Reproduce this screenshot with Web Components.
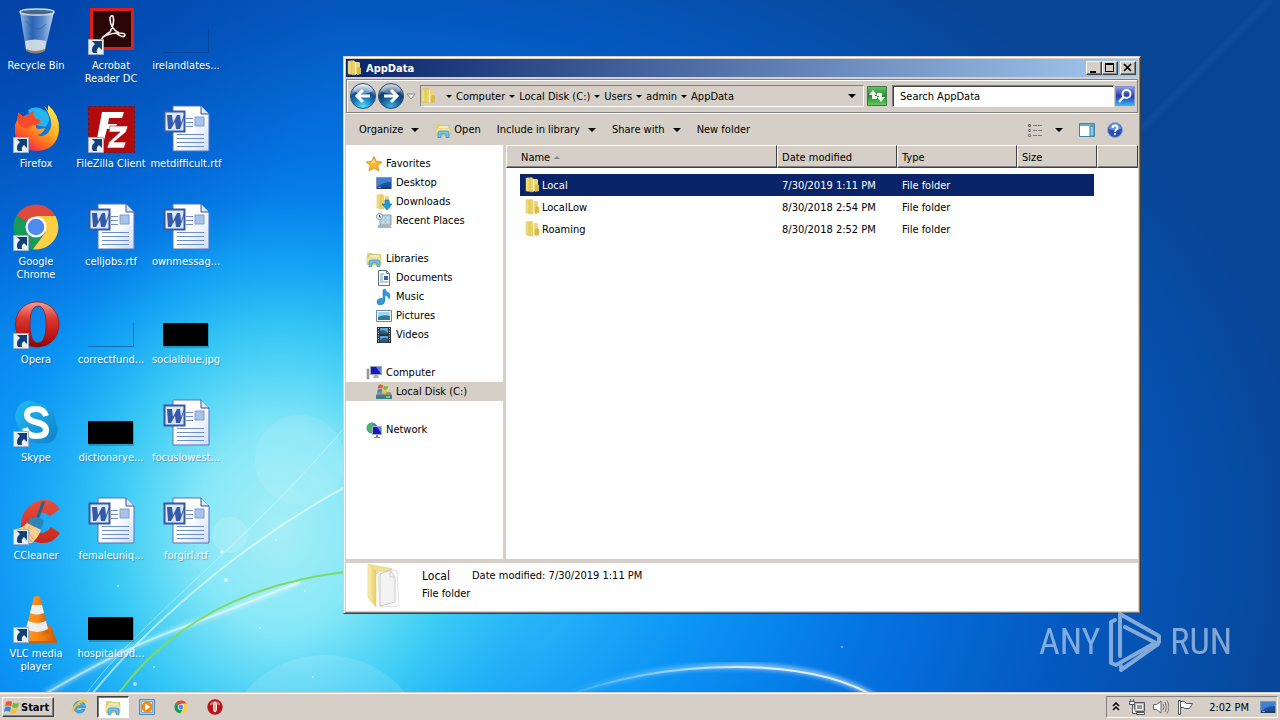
<!DOCTYPE html>
<html lang="en">
<head>
<meta charset="utf-8">
<title>AppData</title>
<style>
    html, body {
        height: 100%;
        margin: 0;
    }

    body {
        --face: #d5cfc7;
        --shade: #808080;
        --navy: #0a246a;
        font: 11px/13px "DejaVu Sans Condensed", "DejaVu Sans", "Noto Sans", sans-serif;
        color: #000;
        overflow: hidden;
    }
</style>
</head>
<body>
<desk-top>
    <desktop-icon icon="bin">Recycle Bin</desktop-icon>
    <desktop-icon icon="firefox" shortcut>Firefox</desktop-icon>
    <desktop-icon icon="chrome" shortcut>Google Chrome</desktop-icon>
    <desktop-icon icon="opera" shortcut>Opera</desktop-icon>
    <desktop-icon icon="skype" shortcut>Skype</desktop-icon>
    <desktop-icon icon="ccleaner" shortcut>CCleaner</desktop-icon>
    <desktop-icon icon="vlc" shortcut>VLC media player</desktop-icon>
    <desktop-icon icon="acrobat" shortcut>Acrobat Reader DC</desktop-icon>
    <desktop-icon icon="filezilla" shortcut>FileZilla Client</desktop-icon>
    <desktop-icon icon="word">celljobs.rtf</desktop-icon>
    <desktop-icon icon="blank">correctfund...</desktop-icon>
    <desktop-icon icon="black">dictionarye...</desktop-icon>
    <desktop-icon icon="word">femaleuniq...</desktop-icon>
    <desktop-icon icon="black">hospitaldvd...</desktop-icon>
    <desktop-icon icon="blank">irelandlates...</desktop-icon>
    <desktop-icon icon="word">metdifficult.rtf</desktop-icon>
    <desktop-icon icon="word">ownmessag...</desktop-icon>
    <desktop-icon icon="black">socialblue.jpg</desktop-icon>
    <desktop-icon icon="word">focuslowest...</desktop-icon>
    <desktop-icon icon="word">forgirl.rtf</desktop-icon>

    <explorer-window slot="window">
        <title-bar slot="title">AppData</title-bar>
        <address-bar slot="address" path="Computer|Local Disk (C:)|Users|admin|AppData"></address-bar>
        <command-bar slot="commands"></command-bar>
        <nav-tree slot="tree"></nav-tree>
        <file-list slot="files"></file-list>
        <details-pane slot="details">
            <span slot="name">Local</span>
            <span slot="date">7/30/2019 1:11 PM</span>
            <span slot="type">File folder</span>
        </details-pane>
    </explorer-window>

    <any-run slot="mark"></any-run>
    <task-bar slot="taskbar">2:02 PM</task-bar>
</desk-top>

<script>
    // every icon: [viewBox size, svg content]
    const folder = `
        <defs><linearGradient id="f"><stop offset="0" stop-color="#f8e894"/><stop offset=".5" stop-color="#e6c956"/><stop offset="1" stop-color="#f0dc84"/></linearGradient></defs>
        <path d="M7 2h5l1 1v11H7z" fill="#ecd675"/><path d="M10 8l2-1 2 1v6l-4 1z" fill="#d9ba4c"/>
        <path d="M1 1l6-.5 1 1V15l-7-1z" fill="url(#f)" stroke="#d3b44a" stroke-width=".5"/><path d="M8 2h1v12l-1 1z" fill="#fff6c4"/>`
    const library = `
        <path d="M1 2h5l1 1h8v11H1z" fill="#e8cf6c"/><path d="M3 4h11v4H3z" fill="#fff" stroke="#9fc070" stroke-width=".6"/>
        <path d="M1 6h14v7H1z" fill="#f6e59a" stroke="#d9bd58" stroke-width=".6"/>
        <path d="M3 15.500V11q0-2 2-2h7q2 0 2 2v4.500h-3V12H6v3.500z" fill="#6fc4ec" stroke="#318ab8" stroke-width=".7"/>`
    const monitor = `
        <path d="M.5 2.500h15v11H.5z" fill="#1d4f9c" stroke="#7f97b5"/><path d="M1 3h14v4q-8 0-14 5z" fill="#3f82d4"/>
        <path d="M1 12h14v2H1z" fill="#263a5a"/><path d="M2 12h3v1H2z" fill="#5fc46b"/>`
    const windowsFlag = `
        <path d="M2 3q3-2 6 0L7 7.500q-3-2-6 0z" fill="#e8582a"/><path d="M9 3.500q3 2 6 0l-1 4.500q-3 2-6 0z" fill="#74b83c"/>
        <path d="M1 8.500q3-2 6 0L6 13q-3-2-6 0z" fill="#3d86d8"/><path d="M7.500 9q3 2 6 0l-1 4.500q-3 2-6 0z" fill="#f6c02c"/>`
    const chrome = `
        <path d="M24 24L4.500 12.700A22.500 22.500 0 0 1 43.500 13H24z" fill="#dd4b3e"/>
        <path d="M24 24L4.500 12.700a22.500 22.500 0 0 0 16.500 33.600L33.500 29z" fill="#179b58"/>
        <path d="M43.500 13A22.500 22.500 0 0 1 21 46.300l12.500-17L24 13z" fill="#fdcf43"/>
        <path d="M24 24L4.500 12.700 14 29z" fill="#179b58"/>
        <circle cx="24" cy="24" r="10.500" fill="#fff"/><circle cx="24" cy="24" r="8.300" fill="#4d8bf0"/>`
    const opera = `
        <defs><linearGradient id="o" x2="0" y2="1"><stop offset="0" stop-color="#f4a09a"/><stop offset=".35" stop-color="#dc3a33"/><stop offset=".8" stop-color="#b80f10"/><stop offset="1" stop-color="#8c0505"/></linearGradient></defs>
        <path fill-rule="evenodd" d="M25 1C12 1 3.500 11 3.500 23.500S12 46 25 46s22-10 22-22.500S38 1 25 1zm1 4c6 0 8 9 8 18.500S32 42 26 42s-8-9-8-18.500S20 5 26 5z" fill="url(#o)" stroke="#93100f" stroke-width=".7"/>`
    const icons = {
        folder: [16, folder],
        library: [16, library],
        monitor: [16, monitor],
        flagWin: [16, windowsFlag],
        chrome: [48, chrome],
        opera: [48, opera],
        operaSmall: [48, '<circle cx="24" cy="24" r="23" fill="#b91218"/><path d="M8 14A20 20 0 0 1 40 14L38 20Q24 10 10 20z" fill="#e0696a"/><ellipse cx="24" cy="24" rx="6" ry="16" fill="#fff"/><ellipse cx="24" cy="24" rx="1.500" ry="13" fill="#b0565a"/>'],
        bin: [48, `
            <defs><linearGradient id="b"><stop offset="0" stop-color="#b8d3ef" stop-opacity=".85"/><stop offset=".35" stop-color="#3f74ba" stop-opacity=".65"/><stop offset=".65" stop-color="#7aa3d8" stop-opacity=".7"/><stop offset="1" stop-color="#dbe9f8" stop-opacity=".9"/></linearGradient></defs>
            <path d="M8 5L14 43q10 5 19 0L42 5z" fill="url(#b)"/>
            <path d="M13 34q10-3 21 0l-1 9q-9 5-19 0z" fill="#e4e8e8" opacity=".85"/><path d="M14 42q9 4 19 0v2q-9 5-19 0z" fill="#8a8270"/>
            <path d="M14 14q6 8 14 8l6-5M17 26l8 4" stroke="#2c5f9f" fill="none" opacity=".7"/>
            <ellipse cx="25" cy="5" rx="17" ry="3" fill="#49688e" stroke="#d0d9e2" stroke-width="1.500"/>`],
        firefox: [48, `
            <defs><linearGradient id="x" x1=".9" y1="0" x2=".2" y2="1"><stop offset="0" stop-color="#fff05a"/><stop offset=".45" stop-color="#ffae1f"/><stop offset=".75" stop-color="#ff5a24"/><stop offset="1" stop-color="#e31587"/></linearGradient></defs>
            <circle cx="26" cy="21" r="17" fill="#1177d8"/><path d="M16 5q10-6 19 3 5 8-2 14L24 20z" fill="#24b6f2"/>
            <path d="M6 8q3 1 5 4 3-2 6-2 2-4 5-4-1 4 1 7 4 1 6 3-1 3-5 4-1 4 3 4 3 0 6-1-2 6-8 7 6 3 11-2 8-10-4-27 3 2 4 5 0-3 0-6 12 10 11 25-2 20-22 21Q5 45 3 28 2 18 6 14z" fill="url(#x)"/>
            <path d="M6 8q3 1 5 4 3-2 6-2 2-4 5-4-1 4 1 7 4 1 6 3-1 3-5 4-6 0-8 4Q6 22 5 15z" fill="#f64a2c"/>`],
        skype: [48, `
            <defs><linearGradient id="s" x2="1" y2="1"><stop offset="0" stop-color="#22bcf4"/><stop offset="1" stop-color="#0e80cc"/></linearGradient></defs>
            <path d="M14 2q6-1 10 2 18 0 20 20 3 5 1 11-3 11-15 9Q10 46 5 25 2 19 4 13 7 4 14 2z" fill="url(#s)"/>
            <path d="M34 17q-2-7-10-7-9 0-9 6 0 5 8 7 11 2 11 8 0 6-10 6-9 0-11-8" fill="none" stroke="#fff" stroke-width="6"/>`],
        ccleaner: [48, `
            <defs><linearGradient id="c" x2="0" y2="1"><stop offset="0" stop-color="#e85040"/><stop offset="1" stop-color="#c9241b"/></linearGradient></defs>
            <path d="M48 12L38 19Q29 11 23 22q-2 11 5 14 7 0 11-6l9 6Q41 47 29 46 14 44 9 34 7 14 23 5 38-2 48 12z" fill="url(#c)"/>
            <path d="M30 4l3 1-6 17-3-1z" fill="#26638e"/><path d="M19 21q8-3 13 3l-3 8-14-6z" fill="#2b85bb"/>
            <path d="M15 26l14 7q-3 8-9 13Q12 48 2 32q8 0 13-6z" fill="#f5cf92"/><path d="M12 30q0 9 8 15M17 29q-1 9 4 13" fill="none" stroke="#d69c50"/>`],
        vlc: [48, `
            <defs><linearGradient id="v"><stop offset="0" stop-color="#f59a2b"/><stop offset=".5" stop-color="#ff8b15"/><stop offset="1" stop-color="#c85a07"/></linearGradient></defs>
            <path d="M9 32l30-1 6 16H5z" fill="url(#v)"/><path d="M5 46h40v2H5z" fill="#c96308"/>
            <path d="M22 2q3-2 6 0l9 36q-12 7-24 0z" fill="url(#v)"/>
            <path d="M20 10h10l2 8q-7 3-14 0z" fill="#eff0f1"/><path d="M16 26q9 4 18 0l2 8q-11 6-22 0z" fill="#eceeef"/>`],
        acrobat: [48, `
            <path d="M3 1h44v42H3z" fill="#e02018"/><path d="M6 4h38v36H6z" fill="#2a0606"/>
            <path d="M14 33q3-5 9-8 5-9 3-16-3-1-3 3 0 9 9 14 6 0 6 2-1 4-9-2-8 1-13 4-3 5-4 4z" fill="none" stroke="#f4efed" stroke-width="1.600"/>`],
        filezilla: [48, `
            <path d="M1.500 1.500h46v46h-46z" fill="#b30a0e" stroke="#7d1018" stroke-dasharray="3 2"/>
            <path d="M15 7h22l-2 6H22l-1 6h9l-2 5h-8l-4 15H9l6-32z" fill="#fff"/>
            <path d="M23 21h18l-2 6-12 10h12l-2 6H20l2-6 11-10H22z" fill="#fff" stroke="#b30a0e" stroke-width=".6"/>`],
        word: [48, `
            <defs><linearGradient id="p" x2="1" y2="1"><stop offset=".5" stop-color="#fff"/><stop offset="1" stop-color="#ccdcf5"/></linearGradient></defs>
            <path d="M11 1h28l8 8v37H11z" fill="url(#p)" stroke="#5375bd"/><path d="M39 1v8h8" fill="#dbe6f8" stroke="#36508c"/>
            <path d="M24 13.500h7M24 17.500h7M24 21.500h7M15 29.500h27M15 33.500h27M15 37.500h27M15 41.500h27" stroke="#6d8fd0"/>
            <path d="M33 12h9v9h-9z" fill="#a9c2ea" stroke="#7d9cd2"/>
            <path d="M2.500 6.500h20v20h-20z" fill="#dce8fa" stroke="#3558a6" stroke-width="2"/>
            <path d="M5 10h5l1 8 4-8h3l1 8 3-8h1l-5 14h-4l-1-7-4 7H6z" fill="#3459a8"/>`],
        blank: [48, '<path d="M1 45.500h45.500V22" fill="none" stroke="#063874" stroke-opacity=".5"/>'],
        black: [48, '<path d="M2 23h45v24H2z" opacity=".2"/><path d="M1 22h45v23H1z"/>'],
        arrow: [16, '<path d="M.5.500h15v15H.5z" fill="#e9eff6" stroke="#9db0c6"/><path d="M4 2h10v9l-3-3q-3 2-2 6H5Q2 9 7 5z" fill="#123f7a"/>'],
        star: [16, '<path d="M8 .5l2.300 5 5.500.5-4.200 3.600L13 15l-5-3-5 3 1.400-5.400L.2 6l5.500-.5z" fill="#ffb728" stroke="#d87e12" stroke-width=".8"/><path d="M8 3l1.500 4H5z" fill="#ffe083"/>'],
        downloads: [16, folder + '<path d="M9 6h4v4h3l-5 6-5-6h3z" fill="#249bdb" stroke="#1272aa" stroke-width=".7"/>'],
        recent: [16, '<path d="M4 2h11v10H4z" fill="#c4dce9" stroke="#7f9aa9"/><path d="M6 4h3v2H6zM10 4h4v2h-4zM6 8h3v2H6zM10 8h4v2h-4z" fill="#fff" stroke="#6a98b4" stroke-width=".5"/><path d="M2 12h12l2 3H2z" fill="#aab5bb"/><circle cx="3.500" cy="3.500" r="3" fill="#eef4f7" stroke="#8497a4"/><path d="M3.500 2v2H5" fill="none" stroke="#345"/>'],
        document: [16, '<path d="M2.500.5h8l3 3v12h-11z" fill="#fff" stroke="#61707e"/><path d="M10.500.5v3h3" fill="none" stroke="#61707e"/><path d="M4 4h4M4 6h3M4 8h3M4 10h3M4 12h8" stroke="#7c95b6"/><path d="M8 6h4v4H8z" fill="#3565a9"/>'],
        music: [16, '<path d="M7 1l2-1q1 3 4 4 2 3 0 6-.5-3-4-4v6q-1 4-5 4-3 0-3-3t3-3.500 3 1z" fill="#2f9adb" stroke="#1a70a8" stroke-width=".5"/>'],
        picture: [16, '<path d="M.5 2.500h15v11H.5z" fill="#fff" stroke="#6c8799"/><path d="M2 4h12v8H2z" fill="#9ed8f0"/><path d="M2 9q5-3 12-1v4H2z" fill="#2f7d91"/>'],
        video: [16, '<path d="M1 0h14v16H1z" fill="#29333d"/><path d="M4 1h8v6H4zM4 9h8v6H4z" fill="#5fa7d8"/><path d="M4 4q4-2 8 2v1H4zM4 13q4-4 8-1v3H4z" fill="#275c83"/><path d="M2.500 1v15M13.500 1v15" stroke="#dfe7ed" stroke-dasharray="1 1.500"/>'],
        computer: [16, '<path d="M1 4h2v10H1z" fill="#a5a5a5" stroke="#777" stroke-width=".5"/><path d="M4 1h12v9H4z" fill="#9ba7c0"/><path d="M5 2h10v7H5z" fill="#1719b4"/><path d="M10 2h5v7z" fill="#587cef"/><path d="M8 10h4l1 3H7z" fill="#a9aeb8"/>'],
        disk: [16, '<path d="M0 11l2-3h12l2 3v4H0z" fill="#80959b"/><path d="M0 11h16v4H0z" fill="#3e7c86"/><path d="M10 12h4v2h-4z" fill="#70cf50"/><g transform="translate(1 -1) scale(.75)">' + windowsFlag + '</g>'],
        network: [16, '<circle cx="6" cy="6" r="5.500" fill="#2f8fd2"/><path d="M1 4q4-5 7-3L6 5l3 2-4 4Q1 9 1 4z" fill="#4fb560"/><path d="M6 4h10v9H6z" fill="#a4b0c8"/><path d="M7 5h8v7H7z" fill="#1719b4"/><path d="M11 5h4v6z" fill="#587cef"/><path d="M10 13h2v2h2v1H8v-1h2z" fill="#888"/>'],
        views: [16, '<path d="M1.500 2.500h2v2h-2zM1.500 7.500h2v2h-2zM1.500 12.500h2v2h-2z" fill="#fff" stroke="#777"/><path d="M6 3.500h4M11 3.500h4M6 8.500h4M11 8.500h4M6 13.500h4M11 13.500h4" stroke="#777"/>'],
        pane: [16, '<path d="M.5 1.500h15v13H.5z" fill="#fff" stroke="#477fa5"/><path d="M1 2h14v2H1z" fill="#5eb0d0"/><path d="M11 4h4v10h-4z" fill="#83cce7" stroke="#477fa5"/>'],
        help: [16, '<circle cx="8" cy="8" r="7.500" fill="#2852b2" stroke="#8ea9d8"/><path d="M2 7a6 6 0 0 1 12 0Q8 9 2 7z" fill="#6e92de"/><path d="M5.500 6q0-2.500 2.500-2.500T10.500 6q0 1-1.500 2-1 .6-1 2M8 11v2" fill="none" stroke="#fff" stroke-width="1.800"/>'],
        refresh: [20, '<defs><linearGradient id="r" x2="0" y2="1"><stop offset="0" stop-color="#73bd72"/><stop offset=".5" stop-color="#249031"/><stop offset="1" stop-color="#5fcf58"/></linearGradient></defs><path d="M.5.500h19v19H.5z" fill="url(#r)" stroke="#3b7d42"/><path d="M2 9l4-5 4 5H8v1h2v3H5V9zM18 11l-4 5-4-5h2v-1h-2V7h5v4z" fill="#f4fff1"/>'],
        search: [20, '<defs><linearGradient id="g" x2="0" y2="1"><stop offset="0" stop-color="#97a6e0"/><stop offset=".5" stop-color="#2336ba"/><stop offset="1" stop-color="#37b7f5"/></linearGradient></defs><path d="M.5.500h19v19H.5z" fill="url(#g)" stroke="#8793c8"/><circle cx="11.500" cy="8" r="4" fill="none" stroke="#fff" stroke-width="2"/><path d="M8.500 11L4 16" stroke="#fff" stroke-width="2.500"/>'],
        bigFolder: [48, '<defs><linearGradient id="y"><stop offset="0" stop-color="#fbf0b4"/><stop offset="1" stop-color="#e7cb62"/></linearGradient></defs><path d="M6 1l24 4v6H14z" fill="#efdd8e"/><path d="M16 9l19-2 2 36-19 1z" fill="#fff" stroke="#e2e2e2"/><path d="M18 11l10-4 5 7v25l-15 4z" fill="#f3f3f3" stroke="#c9c9c9"/><path d="M28 7v7h5" fill="none" stroke="#c9c9c9"/><path d="M6 1l8 7v36l-8-9z" fill="url(#y)" stroke="#e8d080" stroke-width=".6"/>'],
        ie: [16, '<path d="M14 10.500A6 6 0 1 1 14.500 7.500v1.200H5q.2 2.800 3 2.800 1.600 0 2.300-1zM5 6.800h6Q10.600 4.500 8 4.500T5 6.800z" fill="#40b1e8" stroke="#1c82be" stroke-width=".7"/><path d="M1 15Q-1 10 6 4t9.500-3q1 1-.5 4 0-2.500-2-2.500-4 1-8 5.500T1 15z" fill="#f2c643"/>'],
        player: [16, '<path d="M.5.500h15v15H.5z" fill="#a9d0ef" stroke="#5288bb"/><path d="M2.500 2.500h11v11h-11z" fill="#f8fbfd" stroke="#7aa7ce"/><circle cx="8" cy="8" r="5.500" fill="#f38a16"/><path d="M6 4.500l5.500 3.500L6 11.500z" fill="#fff"/>'],
        netTray: [16, '<path d="M5.500 3.500h10v9h-10z" fill="#b9b6b1" stroke="#555"/><path d="M7.500 5.500h6v5h-6z" fill="#999" stroke="#eee"/><path d="M7.500 13.500h8v2h-8z" fill="#fff" stroke="#555"/><path d="M.5 2.500h5v3h-5zM1.500 0v2.500M4.500 0v2.500M3.500 6v8.500H7" fill="#fff" stroke="#555"/>'],
        volume: [16, '<path d="M.5 5.500h3L8 2v12l-4.500-3.500h-3z" fill="#fff" stroke="#666"/><path d="M10 5q2 3 0 6M12 3q3 5 0 10M14 1.500q4 6.500 0 13" fill="none" stroke="#777"/>'],
        flag: [16, '<path d="M1.500 1.500h2v14h-2z" fill="#fff" stroke="#555"/><path d="M3.500 2.500h4l2 2h6l-3 5h-5l-1-1h-3z" fill="#fff" stroke="#555"/>'],
        back: [28, '<defs><radialGradient id="k" cx=".5" cy=".95" r=".9"><stop offset="0" stop-color="#55e5ff"/><stop offset=".45" stop-color="#137dc0"/><stop offset=".7" stop-color="#155090"/><stop offset="1" stop-color="#dcecf8"/></radialGradient></defs><circle cx="14" cy="14" r="12.500" fill="url(#k)" stroke="#2e5071"/><path d="M4 9a11 11 0 0 1 20 0Q14 15 4 9z" fill="#fff" opacity=".4"/><path d="M21 14H8M14 8l-6 6 6 6" fill="none" stroke="#fff" stroke-width="3"/>'],
        forward: [28, '<defs><radialGradient id="k" cx=".5" cy=".95" r=".9"><stop offset="0" stop-color="#3fb4e2"/><stop offset=".45" stop-color="#125d98"/><stop offset=".7" stop-color="#123f70"/><stop offset="1" stop-color="#b8cce0"/></radialGradient></defs><circle cx="14" cy="14" r="12.500" fill="url(#k)" stroke="#2e5071"/><path d="M4 9a11 11 0 0 1 20 0Q14 15 4 9z" fill="#fff" opacity=".3"/><path d="M7 14h13M14 8l6 6-6 6" fill="none" stroke="#fff" stroke-width="3"/>'],
        caret: [8, '<path d="M0 2h8L4 6z"/>'],
        caretSmall: [6, '<path d="M0 2h6L3 5z"/>'],
        caretOpen: [10, '<path d="M1 3h8L5 8z" fill="#eee" stroke="#888"/>'],
        minimize: [12, '<path d="M2 9h6v2H2z"/>'],
        maximize: [12, '<path fill-rule="evenodd" d="M1 1h9v9H1zm1 2h7v6H2z"/>'],
        close: [12, '<path d="M2 2l7 7M9 2L2 9" stroke="#000" stroke-width="1.700"/>'],
        chevrons: [10, '<path d="M2 4l3-3 3 3M2 8l3-3 3 3" fill="none" stroke="#000" stroke-width="1.500"/>']
    }

    // reset shared by the elements that hold buttons
    const buttonReset = `
        button {
            font: inherit;
            color: inherit;
            background: none;
            border: 0;
            padding: 0;
            margin: 0;
            display: flex;
            align-items: center;
            white-space: nowrap;
        }
    `

    function render(el, html) {
        el.attachShadow({ mode: 'open' }).innerHTML = html
    }

    class SvgIcon extends HTMLElement {
        constructor() {
            super()
            this.attachShadow({ mode: 'open' })
        }

        connectedCallback() {
            const [box, content] = icons[this.getAttribute('name')]
            const size = this.getAttribute('size') || box
            this.shadowRoot.innerHTML = `<style>
                :host { display: block; flex: none; }
                svg { display: block; }
            </style>
            <svg width="${size}" height="${size}" viewBox="0 0 ${box} ${box}" aria-hidden="true">${content}</svg>`
        }
    }

    class DeskTop extends HTMLElement {
        constructor() {
            super()
            render(this, `<style>
                :host {
                    display: flex;
                    flex-direction: column;
                    height: 100vh;
                    position: relative;
                }
                main {
                    flex: 1;
                    min-height: 0;
                    display: grid;
                    grid-auto-flow: column;
                    grid-template-rows: repeat(7, 98px);
                    grid-auto-columns: 72px;
                    column-gap: 3px;
                    position: relative;
                }
                wall-paper {
                    position: absolute;
                    inset: 0;
                }
            </style>
            <wall-paper></wall-paper>
            <main><slot></slot><slot name="window"></slot></main>
            <slot name="mark"></slot>
            <slot name="taskbar"></slot>`)
        }
    }

    class WallPaper extends HTMLElement {
        constructor() {
            super()
            render(this, `<style>
                :host { display: block; }
                svg { display: block; width: 100%; height: 100%; }
            </style>
            <svg viewBox="0 0 1280 720" preserveAspectRatio="xMidYMid slice" aria-hidden="true">
                <defs>
                    <radialGradient id="sky" gradientUnits="userSpaceOnUse" cx="0" cy="0" r="700" gradientTransform="translate(340 540) scale(1.400 1)">
                        <stop offset="0" stop-color="#5fdcf8"/>
                        <stop offset=".12" stop-color="#4ccff7"/>
                        <stop offset=".24" stop-color="#27b0f8"/>
                        <stop offset=".38" stop-color="#0b94f4"/>
                        <stop offset=".55" stop-color="#0474e3"/>
                        <stop offset=".75" stop-color="#0459c0"/>
                        <stop offset="1" stop-color="#084595"/>
                    </radialGradient>
                    <radialGradient id="glow" gradientUnits="userSpaceOnUse" cx="0" cy="0" r="280" gradientTransform="translate(280 530) scale(1 1.200)">
                        <stop offset="0" stop-color="#a6eef6"/>
                        <stop offset=".3" stop-color="#8ae9f7" stop-opacity=".95"/>
                        <stop offset=".6" stop-color="#3dcff4" stop-opacity=".8"/>
                        <stop offset="1" stop-color="#08a8f4" stop-opacity="0"/>
                    </radialGradient>
                    <radialGradient id="corner" gradientUnits="userSpaceOnUse" cx="0" cy="0" r="340">
                        <stop offset="0" stop-color="#0038a0" stop-opacity=".6"/>
                        <stop offset="1" stop-color="#0038a0" stop-opacity="0"/>
                    </radialGradient>
                    <linearGradient id="arc"><stop offset="0" stop-color="#fff" stop-opacity="0"/><stop offset=".6" stop-color="#fff"/><stop offset="1" stop-color="#fff"/></linearGradient>
                    <filter id="soft"><feGaussianBlur stdDeviation="2"/></filter>
                </defs>
                <path d="M0 0h1280v720H0z" fill="url(#sky)"/>
                <path d="M0 180h570v540H0z" fill="url(#glow)"/>
                <path d="M0 0h340v340H0z" fill="url(#corner)"/>
                <circle cx="325" cy="760" r="105" fill="#fff" opacity=".12"/>
                <circle cx="300" cy="460" r="45" fill="#fff" opacity=".1"/>
                <circle cx="230" cy="535" r="18" fill="#fff" opacity=".15"/>
                <g fill="none" stroke="#fff">
                    <path d="M45 694Q120 650 175 630T300 582" stroke-width="5" opacity=".4" filter="url(#soft)"/>
                    <path d="M45 694Q120 650 175 630T300 582" stroke-width="2" opacity=".5"/>
                    <path d="M86 694C140 620 240 550 345 427" opacity=".4"/>
                    <path d="M92 694C140 635 230 550 345 487" stroke-width="2" opacity=".55"/>
                </g>
                <path d="M118 694Q195 590 345 572" fill="none" stroke="#7fdc62" stroke-width="2"/>
                <path d="M555 700Q640 666 735 666T880 700" fill="none" stroke="url(#arc)" stroke-width="6" opacity=".5" filter="url(#soft)"/>
                <path d="M555 700Q640 667 735 667T880 700" fill="none" stroke="url(#arc)" stroke-width="2" opacity=".8"/>
                <path d="M1140 130L1270 0" stroke="#4a94dd" stroke-width="4" opacity=".12" filter="url(#soft)"/>
                <g fill="#fff" opacity=".6">
                    <circle cx="222" cy="552" r="2"/><circle cx="226" cy="580" r="2"/><circle cx="276" cy="540" r="1"/>
                    <circle cx="135" cy="684" r="2"/><circle cx="154" cy="667" r="1"/><circle cx="305" cy="591" r="1"/>
                    <circle cx="118" cy="586" r="1"/><circle cx="260" cy="628" r="1"/><circle cx="313" cy="677" r="1"/><circle cx="842" cy="647" r="1"/>
                </g>
            </svg>`)
        }
    }

    class DesktopIcon extends HTMLElement {
        constructor() {
            super()
            this.attachShadow({ mode: 'open' })
        }

        connectedCallback() {
            const shortcut = this.hasAttribute('shortcut')
                ? '<svg-icon class="arrow" name="arrow"></svg-icon>'
                : ''
            this.shadowRoot.innerHTML = `<style>
                ${buttonReset}
                :host {
                    display: block;
                    padding-top: 7px;
                }
                button {
                    flex-direction: column;
                    gap: 4px;
                    width: 100%;
                    color: #fff;
                    white-space: normal;
                    text-shadow: 1px 1px 1px #0a3c7866;
                }
                .picture { position: relative; }
                .arrow {
                    position: absolute;
                    left: 1px;
                    bottom: 0;
                }
            </style>
            <button>
                <span class="picture"><svg-icon name="${this.getAttribute('icon')}"></svg-icon>${shortcut}</span>
                <span><slot></slot></span>
            </button>`
        }
    }

    class ExplorerWindow extends HTMLElement {
        constructor() {
            super()
            render(this, `<style>
                :host {
                    position: absolute;
                    left: 343px;
                    top: 56px;
                    width: 798px;
                    height: 558px;
                    box-sizing: border-box;
                    display: flex;
                    flex-direction: column;
                    background: var(--face);
                    border: 1px solid;
                    border-color: var(--face) #404040 #404040 var(--face);
                    box-shadow: inset 1px 1px #fff, inset -1px -1px var(--shade);
                    padding: 2px;
                }
                .body {
                    flex: 1;
                    min-height: 0;
                    display: grid;
                    grid-template-columns: 157px 1fr;
                    column-gap: 3px;
                    padding-bottom: 4px;
                }
            </style>
            <slot name="title"></slot>
            <slot name="address"></slot>
            <slot name="commands"></slot>
            <div class="body"><slot name="tree"></slot><slot name="files"></slot></div>
            <slot name="details"></slot>`)
        }
    }

    class TitleBar extends HTMLElement {
        constructor() {
            super()
            render(this, `<style>
                ${buttonReset}
                :host {
                    display: flex;
                    align-items: center;
                    gap: 3px;
                    height: 18px;
                    padding: 0 2px 0 1px;
                    background: linear-gradient(90deg, var(--navy), #a6caf0);
                    color: #fff;
                    font-weight: bold;
                }
                .title { flex: 1; }
                .buttons { display: flex; }
                button {
                    box-sizing: border-box;
                    width: 16px;
                    height: 14px;
                    justify-content: center;
                    background: var(--face);
                    border: 1px solid;
                    border-color: #fff #404040 #404040 #fff;
                    box-shadow: inset -1px -1px var(--shade);
                }
                button:last-child { margin-left: 2px; }
            </style>
            <svg-icon name="folder"></svg-icon>
            <span class="title"><slot></slot></span>
            <span class="buttons">
                <button aria-label="Minimize"><svg-icon name="minimize"></svg-icon></button>
                <button aria-label="Maximize"><svg-icon name="maximize"></svg-icon></button>
                <button aria-label="Close"><svg-icon name="close"></svg-icon></button>
            </span>`)
        }
    }

    class AddressBar extends HTMLElement {
        constructor() {
            super()
            this.attachShadow({ mode: 'open' })
        }

        connectedCallback() {
            const crumbs = this.getAttribute('path').split('|')
                .map(name => `<svg-icon name="caretSmall"></svg-icon><button>${name}</button>`)
                .join('')

            this.shadowRoot.innerHTML = `<style>
                ${buttonReset}
                :host {
                    display: flex;
                    align-items: center;
                    height: 32px;
                    margin-top: 2px;
                    padding: 0 2px;
                    border: 1px solid var(--shade);
                    box-shadow: inset 1px 1px #fff, 0 1px #fff;
                }
                .drop { margin: 0 4px 0 1px; }
                .path {
                    flex: 1;
                    display: flex;
                    align-items: center;
                    gap: 4px;
                    height: 20px;
                    border: 1px solid;
                    border-color: var(--shade) #fff #fff var(--shade);
                    padding-right: 7px;
                }
                .path > svg-icon:first-child { margin-right: 5px; }
                .path .end { margin-left: auto; }
                .refresh { margin: 0 5px 0 3px; }
                input {
                    box-sizing: border-box;
                    width: 222px;
                    height: 22px;
                    margin-right: 1px;
                    padding: 0 7px;
                    border: 1px solid;
                    border-color: var(--shade) #fff #fff var(--shade);
                    box-shadow: inset 1px 1px #404040;
                    border-radius: 0;
                    background: #fff;
                    font: inherit;
                }
                input::placeholder { color: #000; opacity: 1; }
            </style>
            <button aria-label="Back"><svg-icon name="back"></svg-icon></button>
            <button aria-label="Forward"><svg-icon name="forward"></svg-icon></button>
            <button class="drop" aria-label="Recent pages"><svg-icon name="caretOpen"></svg-icon></button>
            <div class="path">
                <svg-icon name="folder"></svg-icon>
                ${crumbs}
                <button class="end" aria-label="Previous locations"><svg-icon name="caret"></svg-icon></button>
            </div>
            <button class="refresh" aria-label="Refresh"><svg-icon name="refresh"></svg-icon></button>
            <input type="search" aria-label="Search AppData" placeholder="Search AppData">
            <button aria-label="Search"><svg-icon name="search"></svg-icon></button>`
        }
    }

    class CommandBar extends HTMLElement {
        constructor() {
            super()
            render(this, `<style>
                ${buttonReset}
                :host {
                    display: flex;
                    align-items: center;
                    gap: 16px;
                    height: 31px;
                    margin-top: 1px;
                    padding: 0 15px 0 13px;
                }
                button { gap: 8px; }
                .open { gap: 3px; }
                .views { margin-left: auto; gap: 12px; }
                .help { margin-left: -4px; }
            </style>
            <button>Organize<svg-icon name="caret"></svg-icon></button>
            <button class="open"><svg-icon name="library"></svg-icon>Open</button>
            <button>Include in library<svg-icon name="caret"></svg-icon></button>
            <button>Share with<svg-icon name="caret"></svg-icon></button>
            <button>New folder</button>
            <button class="views" aria-label="Change your view"><svg-icon name="views"></svg-icon><svg-icon name="caret"></svg-icon></button>
            <button aria-label="Show the preview pane"><svg-icon name="pane"></svg-icon></button>
            <button class="help" aria-label="Help"><svg-icon name="help"></svg-icon></button>`)
        }
    }

    class NavTree extends HTMLElement {
        constructor() {
            super()
            this.groups = [
                [['star', 'Favorites'], ['monitor', 'Desktop'], ['downloads', 'Downloads'], ['recent', 'Recent Places']],
                [['library', 'Libraries'], ['document', 'Documents'], ['music', 'Music'], ['picture', 'Pictures'], ['video', 'Videos']],
                [['computer', 'Computer'], ['disk', 'Local Disk (C:)', true]],
                [['network', 'Network']]
            ]
            const lists = this.groups
                .map(items => `<ul>${items.map(this.item).join('')}</ul>`)
                .join('')

            render(this, `<style>
                :host {
                    display: block;
                    background: #fff;
                    padding-top: 9px;
                }
                ul {
                    list-style: none;
                    margin: 0 0 19px;
                    padding: 0;
                }
                a {
                    display: flex;
                    align-items: center;
                    gap: 4px;
                    height: 19px;
                    padding-left: 30px;
                    color: inherit;
                    text-decoration: none;
                }
                li:first-child a { padding-left: 20px; }
                a.current { background: var(--face); }
            </style>
            <nav>${lists}</nav>`)
        }

        item([icon, text, current]) {
            return `<li><a href="#" ${current ? 'class="current"' : ''}><svg-icon name="${icon}"></svg-icon>${text}</a></li>`
        }
    }

    class FileList extends HTMLElement {
        constructor() {
            super()
            this.files = [
                ['Local', '7/30/2019 1:11 PM'],
                ['LocalLow', '8/30/2018 2:54 PM'],
                ['Roaming', '8/30/2018 2:52 PM']
            ]
            const rows = this.files.map(([name, date], i) => `
                <tr ${i === 0 ? 'class="selected"' : ''}>
                    <td class="lead"></td>
                    <td class="name"><span><svg-icon name="folder"></svg-icon>${name}</span></td>
                    <td>${date}</td>
                    <td>File folder</td>
                    <td class="size"></td>
                </tr>`).join('')

            render(this, `<style>
                :host {
                    display: block;
                    background: #fff;
                }
                table {
                    width: 100%;
                    table-layout: fixed;
                    border-collapse: separate;
                    border-spacing: 0;
                }
                .w-lead { width: 14px; }
                .w-name { width: 257px; }
                .w-mid { width: 120px; }
                .w-size { width: 80px; }
                th {
                    box-sizing: border-box;
                    height: 23px;
                    padding: 2px 4px 0;
                    text-align: left;
                    font-weight: normal;
                    background: var(--face);
                    border: 1px solid;
                    border-color: #fff #404040 #404040 #fff;
                    box-shadow: inset 0 -1px var(--shade);
                }
                th.first { padding-left: 14px; }
                th svg { margin-left: 4px; vertical-align: 2px; }
                tbody::before {
                    content: "";
                    display: table-row;
                    height: 6px;
                }
                td {
                    height: 22px;
                    padding: 0 5px;
                }
                td span { display: flex; align-items: center; gap: 1px; }
                .selected td {
                    background: var(--navy) padding-box;
                    color: #fff;
                }
                .selected td.lead { background: none; }
                td.size { border-right: 3px solid #fff; }
            </style>
            <table>
                <colgroup><col class="w-lead"><col class="w-name"><col class="w-mid"><col class="w-mid"><col class="w-size"><col></colgroup>
                <thead>
                    <tr>
                        <th class="first" colspan="2">Name<svg width="6" height="4" aria-hidden="true"><path d="M0 4h6L3 1z" fill="#888"/></svg></th>
                        <th>Date modified</th>
                        <th>Type</th>
                        <th>Size</th>
                        <th></th>
                    </tr>
                </thead>
                <tbody>${rows}</tbody>
            </table>`)
        }
    }

    class DetailsPane extends HTMLElement {
        constructor() {
            super()
            render(this, `<style>
                :host {
                    display: flex;
                    align-items: flex-start;
                    gap: 12px;
                    height: 48px;
                    padding-left: 16px;
                    background: #fff;
                }
                .text { padding-top: 4px; line-height: 18px; }
                .name { font-size: 12px; margin-right: 22px; }
                .line { display: flex; }
            </style>
            <svg-icon name="bigFolder"></svg-icon>
            <div class="text">
                <div class="line"><span class="name"><slot name="name"></slot></span><span>Date modified: <slot name="date"></slot></span></div>
                <div><slot name="type"></slot></div>
            </div>`)
        }
    }

    class AnyRun extends HTMLElement {
        constructor() {
            super()
            render(this, `<style>
                :host {
                    position: absolute;
                    right: 48px;
                    bottom: 46px;
                    display: flex;
                    align-items: center;
                    gap: 7px;
                    color: #fff;
                    opacity: .5;
                    font: 36px/64px "Roboto Condensed", "Open Sans Condensed", "Liberation Sans Narrow", Lato, sans-serif;
                }
                svg { display: block; }
            </style>
            <span>ANY</span>
            <svg width="56" height="64" viewBox="0 0 56 64" fill="none" stroke="currentColor" stroke-width="4" stroke-linejoin="round" stroke-linecap="round" aria-hidden="true">
                <path d="M8 10L4 12v41l5 2 39-22"/><path d="M13 46V4l39 22v6"/><path d="M18 17l33 17L14 60v-4"/>
            </svg>
            <span>RUN</span>`)
        }
    }

    class TaskBar extends HTMLElement {
        constructor() {
            super()
            render(this, `<style>
                ${buttonReset}
                :host {
                    position: relative;
                    display: flex;
                    align-items: center;
                    box-sizing: border-box;
                    height: 28px;
                    padding: 1px 2px 0;
                    background: var(--face);
                    border-top: 1px solid var(--face);
                    box-shadow: inset 0 1px #fff;
                }
                .start {
                    height: 20px;
                    padding: 0 4px 0 1px;
                    gap: 1px;
                    font-weight: bold;
                    border: 1px solid;
                    border-color: #fff #404040 #404040 #fff;
                    box-shadow: inset -1px -1px var(--shade);
                }
                .apps { display: flex; margin-left: 9px; }
                .apps button {
                    box-sizing: border-box;
                    width: 32px;
                    height: 22px;
                    margin-right: 2px;
                    justify-content: center;
                    border: 1px solid transparent;
                }
                .apps .active {
                    background: #fff;
                    border-color: #404040 #fff #fff #404040;
                    box-shadow: inset 1px 1px var(--shade);
                }
                .tray {
                    display: flex;
                    align-items: center;
                    box-sizing: border-box;
                    height: 22px;
                    margin-left: auto;
                    padding: 0 1px 0 4px;
                    gap: 8px;
                    border: 1px solid;
                    border-color: var(--shade) #fff #fff var(--shade);
                }
                time { margin: 0 3px 0 8px; }
            </style>
            <button class="start"><svg-icon name="flagWin"></svg-icon>Start</button>
            <div class="apps">
                <button aria-label="Internet Explorer"><svg-icon name="ie"></svg-icon></button>
                <button class="active" aria-label="Windows Explorer"><svg-icon name="library"></svg-icon></button>
                <button aria-label="Windows Media Player"><svg-icon name="player"></svg-icon></button>
                <button aria-label="Google Chrome"><svg-icon name="chrome" size="14"></svg-icon></button>
                <button aria-label="Opera"><svg-icon name="operaSmall" size="16"></svg-icon></button>
            </div>
            <div class="tray">
                <button aria-label="Show hidden icons"><svg-icon name="chevrons"></svg-icon></button>
                <button aria-label="Network"><svg-icon name="netTray"></svg-icon></button>
                <button aria-label="Volume"><svg-icon name="volume"></svg-icon></button>
                <button aria-label="Action Center"><svg-icon name="flag"></svg-icon></button>
                <time><slot></slot></time>
                <button aria-label="Show desktop"><svg-icon name="monitor"></svg-icon></button>
            </div>`)
        }
    }

    customElements.define('svg-icon', SvgIcon)
    customElements.define('wall-paper', WallPaper)
    customElements.define('desk-top', DeskTop)
    customElements.define('desktop-icon', DesktopIcon)
    customElements.define('explorer-window', ExplorerWindow)
    customElements.define('title-bar', TitleBar)
    customElements.define('address-bar', AddressBar)
    customElements.define('command-bar', CommandBar)
    customElements.define('nav-tree', NavTree)
    customElements.define('file-list', FileList)
    customElements.define('details-pane', DetailsPane)
    customElements.define('any-run', AnyRun)
    customElements.define('task-bar', TaskBar)
</script>
</body>
</html>
